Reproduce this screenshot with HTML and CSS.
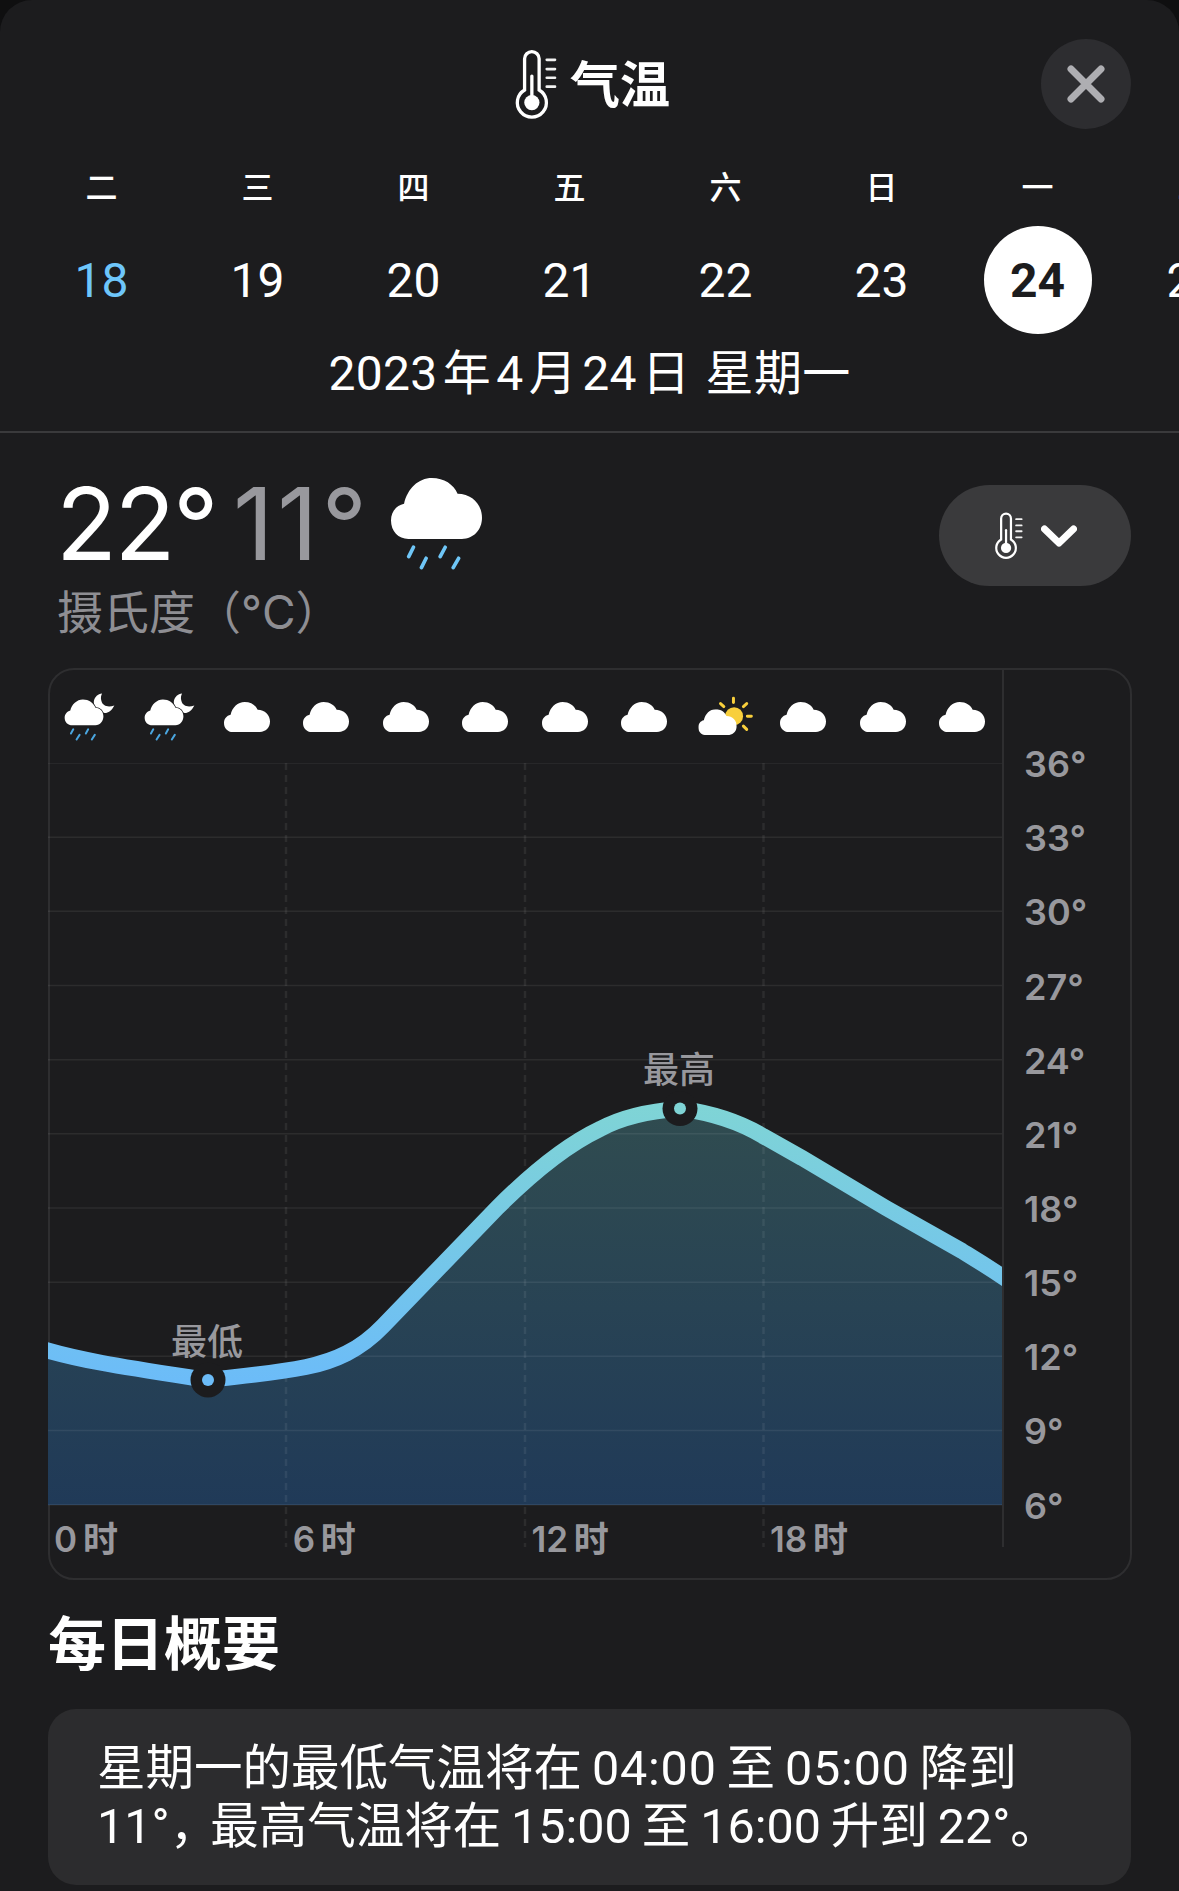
FILE: index.html
```html
<!DOCTYPE html>
<html lang="zh-CN">
<head>
<meta charset="utf-8">
<title>气温</title>
<link rel="stylesheet" href="styles.css">
</head>
<body>
<svg class="defs" width="0" height="0" aria-hidden="true">
  <defs>
    <symbol id="cloud" viewBox="33 53 272 182" preserveAspectRatio="none">
      <path d="M85 235C55 235 33 212 33 180C33 155 48 135 72 130C82 85 115 53 155 53C192 53 220 72 232 100C275 100 305 132 305 172C305 208 280 235 245 235Z" fill="#fff"/>
    </symbol>
    <symbol id="therm" viewBox="100 52 130 216">
      <path d="M132 178V84a22 22 0 0 1 44 0V178a44 44 0 1 1 -44 0Z" fill="none" stroke="#fff" stroke-width="10"/>
      <path d="M154 136V216" stroke="#fff" stroke-width="10" stroke-linecap="round"/>
      <circle cx="154" cy="216" r="23" fill="#fff"/>
      <path d="M199 87H224M199 115H224M199 141H224M199 168H224" stroke="#f2f2f2" stroke-width="8" stroke-linecap="round"/>
    </symbol>
    <symbol id="moonrain" viewBox="40 65 160 150">
      <path d="M158 69C132 72 122 105 150 122C165 132 182 130 195 105C178 112 160 108 156 92C153 82 155 75 158 69Z" fill="#fff"/>
      <path d="M69 165C54 165 45 155 45 142C45 131 52 123 62 120C66 102 82 87 100 87C118 87 132 97 138 112C152 112 162 124 162 138C162 153 152 165 138 165Z" fill="#fff" stroke="#1c1c1e" stroke-width="5" paint-order="stroke"/>
      <path d="M71 177L64 190M116 177L109 190M90 194L81 208M136 194L127 208" stroke="#4aa6e0" stroke-width="6" stroke-linecap="round"/>
    </symbol>
    <symbol id="suncloud" viewBox="50 72 172 125">
      <circle cx="162" cy="135" r="27" fill="#f8cf3c"/>
      <path d="M160 81V94M121 97L131 106M200 97L190 106M202 135H214M190 165L200 175" stroke="#f8cf3c" stroke-width="9" stroke-linecap="round"/>
      <use href="#cloud" x="54" y="114" width="116" height="78"/>
    </symbol>
  </defs>
</svg>

<main class="sheet">
  <header class="header">
    <div class="top-row">
      <span></span>
      <h1 class="title">
        <svg class="title-therm"><use href="#therm"/></svg>
        <span class="title-text">气温</span>
      </h1>
      <button class="close" type="button" aria-label="关闭">
        <svg class="close-x" viewBox="0 0 40 40"><path d="M5 5L35 35M35 5L5 35"/></svg>
      </button>
    </div>
    <div class="week">
      <span>二</span><span>三</span><span>四</span><span>五</span><span>六</span><span>日</span><span>一</span><span>二</span>
    </div>
    <div class="days">
      <span class="day today">18</span>
      <span class="day">19</span>
      <span class="day">20</span>
      <span class="day">21</span>
      <span class="day">22</span>
      <span class="day">23</span>
      <span class="day selected">24</span>
      <span class="day">25</span>
    </div>
    <p class="date">2023&hairsp;年&hairsp;4&hairsp;月&hairsp;24&hairsp;日&thinsp;&hairsp;星期一</p>
  </header>

  <section class="summary-head">
    <div class="temps">
      <div class="temp-line">
        <span class="high">22°</span>
        <span class="low">11°</span>
        <svg class="big-cloud" viewBox="33 53 272 275">
          <path d="M85 235C55 235 33 212 33 180C33 155 48 135 72 130C82 85 115 53 155 53C192 53 220 72 232 100C275 100 305 132 305 172C305 208 280 235 245 235Z" fill="#fff"/>
          <path d="M100 260L86 288M138 293L124 321M195 260L180 288M235 293L219 321" stroke="#6fc6f7" stroke-width="11" stroke-linecap="round"/>
        </svg>
      </div>
      <p class="unit">摄氏度（°C）</p>
    </div>
    <button class="pill" type="button">
      <svg class="pill-therm"><use href="#therm"/></svg>
      <svg class="chevron" viewBox="0 0 36 22"><path d="M3.500 4L18 18L32.500 4"/></svg>
    </button>
  </section>

  <section class="chart-card">
    <div class="plot">
      <div class="icons">
        <svg class="ic-moon"><use href="#moonrain"/></svg>
        <svg class="ic-moon"><use href="#moonrain"/></svg>
        <svg class="ic-cloud"><use href="#cloud"/></svg>
        <svg class="ic-cloud"><use href="#cloud"/></svg>
        <svg class="ic-cloud"><use href="#cloud"/></svg>
        <svg class="ic-cloud"><use href="#cloud"/></svg>
        <svg class="ic-cloud"><use href="#cloud"/></svg>
        <svg class="ic-cloud"><use href="#cloud"/></svg>
        <svg class="ic-sun"><use href="#suncloud"/></svg>
        <svg class="ic-cloud"><use href="#cloud"/></svg>
        <svg class="ic-cloud"><use href="#cloud"/></svg>
        <svg class="ic-cloud"><use href="#cloud"/></svg>
      </div>
      <div class="canvas">
        <svg class="graph" viewBox="48 763 954 784" width="954" height="784">
          <defs>
            <linearGradient id="fillGrad" gradientUnits="userSpaceOnUse" x1="0" y1="1110" x2="0" y2="1505">
              <stop offset="0" stop-color="#304c50"/>
              <stop offset="1" stop-color="#203a58"/>
            </linearGradient>
            <linearGradient id="lineGrad" gradientUnits="userSpaceOnUse" x1="0" y1="1108" x2="0" y2="1380">
              <stop offset="0" stop-color="#7fd4d6"/>
              <stop offset="1" stop-color="#6cbcf8"/>
            </linearGradient>
          </defs>
          <path fill="url(#fillGrad)" d="M48 1351C80 1361 130 1368 208 1380C240 1376 270 1374 306 1367C335 1361 360 1350 383 1326C420 1288 460 1246 497 1208C520 1185 560 1148 600 1129C622 1117 650 1111 680 1108.600C705 1112 735 1119 763 1136L802 1158L886 1208L962 1251C975 1259 990 1268 1002 1276V1505H48Z"/>
          <g class="hgrid">
            <path d="M48 763H1002"/><path d="M48 837.200H1002"/><path d="M48 911.300H1002"/><path d="M48 985.500H1002"/>
            <path d="M48 1059.700H1002"/><path d="M48 1133.800H1002"/><path d="M48 1208H1002"/><path d="M48 1282.200H1002"/>
            <path d="M48 1356.300H1002"/><path d="M48 1430.500H1002"/><path d="M48 1504.700H1002"/>
          </g>
          <g class="vgrid">
            <path d="M286 763V1547"/><path d="M525 763V1547"/><path d="M763.500 763V1547"/>
          </g>
          <path class="curve" d="M36 1347C80 1361 130 1368 208 1380C240 1376 270 1374 306 1367C335 1361 360 1350 383 1326C420 1288 460 1246 497 1208C520 1185 560 1148 600 1129C622 1117 650 1111 680 1108.600C705 1112 735 1119 763 1136L802 1158L886 1208L962 1251C975 1259 990 1268 1012 1283"/>
          <circle cx="208" cy="1380" r="17.500" fill="#1c1c1e"/>
          <circle cx="208" cy="1380" r="6" fill="#6cbcf8"/>
          <circle cx="680" cy="1108.600" r="17.500" fill="#1c1c1e"/>
          <circle cx="680" cy="1108.600" r="6" fill="#7fd4d6"/>
        </svg>
        <span class="extreme ext-low">最低</span>
        <span class="extreme ext-high">最高</span>
        <div class="hours">
          <span>0&thinsp;时</span><span>6&thinsp;时</span><span>12&thinsp;时</span><span>18&thinsp;时</span>
        </div>
      </div>
    </div>
    <div class="axis">
      <span>36°</span><span>33°</span><span>30°</span><span>27°</span><span>24°</span><span>21°</span>
      <span>18°</span><span>15°</span><span>12°</span><span>9°</span><span>6°</span>
    </div>
  </section>

  <h2 class="daily-title">每日概要</h2>
  <section class="daily-card">
    <p>星期一的最低气温将在&thinsp;<span class="num">04:00</span>&thinsp;至&thinsp;<span class="num">05:00</span>&thinsp;降到<br>11°<span class="comma">，</span>最高气温将在&thinsp;15:00&thinsp;至&thinsp;16:00&thinsp;升到&thinsp;22°。</p>
  </section>
</main>
</body>
</html>
```

FILE: styles.css
```css
* { box-sizing: border-box; }

html, body {
  margin: 0;
  padding: 0;
  background: #0f0f10;
}

body {
  font-family: Roboto, "Noto Sans CJK SC", sans-serif;
  color: #fff;
}

.defs { position: absolute; }

.sheet {
  width: 1179px;
  height: 1891px;
  overflow: hidden;
  background: #1c1c1e;
  border-radius: 32px 32px 0 0;
}

.header {
  padding-top: 39px;
  padding-bottom: 29px;
  border-bottom: 2px solid #3a3a3c;
}

.top-row {
  display: grid;
  grid-template-columns: 1fr auto 1fr;
  align-items: center;
  height: 90px;
  padding: 0 48px;
}

.title {
  display: flex;
  align-items: center;
  gap: 13px;
  margin: 0;
  padding-left: 5px;
  font-size: 50px;
  line-height: 72px;
  font-weight: 700;
}

.title-text { padding-top: 3px; }

.title-therm { width: 43px; height: 72px; }

.close {
  justify-self: end;
  display: flex;
  align-items: center;
  justify-content: center;
  width: 90px;
  height: 90px;
  padding: 0;
  border: 0;
  border-radius: 50%;
  background: #2d2d30;
}

.close-x { width: 40px; height: 40px; }
.close-x path { fill: none; stroke: #aeaeb2; stroke-width: 7; stroke-linecap: round; }

.week, .days {
  display: grid;
  grid-template-columns: repeat(8, 156px);
  margin-left: 23.500px;
  justify-items: center;
  align-items: center;
}

.week {
  height: 40px;
  margin-top: 39px;
  font-size: 32px;
  line-height: 40px;
  font-weight: 500;
}

.days {
  height: 108px;
  margin-top: 18px;
}

.day {
  display: flex;
  align-items: center;
  justify-content: center;
  width: 108px;
  height: 108px;
  font-size: 48px;
}

.today { color: #6ec6fa; }

.selected {
  border-radius: 50%;
  background: #fff;
  color: #1c1c1e;
  font-weight: 700;
}

.date {
  margin: 12px 0 0;
  font-size: 48px;
  line-height: 56px;
  letter-spacing: 0.300px;
  text-align: center;
}

.summary-head {
  display: flex;
  justify-content: space-between;
  align-items: flex-start;
  height: 235px;
  padding: 43px 48px 0 56px;
}

.temp-line {
  display: flex;
  align-items: center;
  height: 96px;
  font-family: Inter, "Noto Sans CJK SC", sans-serif;
  font-size: 100px;
  line-height: 96px;
  letter-spacing: -2.500px;
}

.low {
  margin-left: 17px;
  letter-spacing: 3.500px;
  color: #98989d;
}

.big-cloud {
  width: 91px;
  height: 92px;
  margin-left: 21px;
  margin-top: -1px;
}

.unit {
  margin: 14px 0 0 1px;
  font-family: Inter, "Noto Sans CJK SC", sans-serif;
  font-size: 46px;
  line-height: 52px;
  color: #8e8e93;
}

.pill {
  display: flex;
  align-items: center;
  justify-content: center;
  gap: 18px;
  width: 192px;
  height: 101px;
  margin-top: 9px;
  padding: 0;
  border: 0;
  border-radius: 51px;
  background: #3a3a3c;
}

.pill-therm { width: 29px; height: 49px; }
.chevron { width: 36px; height: 22px; }
.chevron path { fill: none; stroke: #fff; stroke-width: 7; stroke-linecap: round; stroke-linejoin: round; }

.chart-card {
  display: flex;
  width: 1084px;
  height: 912px;
  margin-left: 48px;
  border: 2px solid #2e2e30;
  border-radius: 26px;
}

.plot {
  width: 952px;
  height: 877px;
}

.icons {
  display: grid;
  grid-template-columns: repeat(12, 79.500px);
  justify-items: center;
  align-items: center;
  width: 954px;
  height: 93px;
  margin-left: -2px;
}

.ic-moon { width: 53px; height: 50px; margin-left: 4px; }
.ic-cloud { width: 46px; height: 30px; margin-top: 1px; }
.ic-sun { width: 57px; height: 42px; margin-top: -2px; margin-left: 4px; }

.canvas {
  position: relative;
  width: 954px;
  height: 784px;
  margin-left: -2px;
}

.graph { display: block; }

.hgrid path { stroke: rgba(255, 255, 255, 0.07); stroke-width: 1.600; fill: none; }
.vgrid path { stroke: rgba(255, 255, 255, 0.07); stroke-width: 2.500; stroke-dasharray: 7 5; fill: none; }
.curve { fill: none; stroke: url(#lineGrad); stroke-width: 16; }

.extreme {
  position: absolute;
  transform: translateX(-50%);
  font-size: 36px;
  line-height: 40px;
  font-weight: 500;
  color: #98989d;
}

.ext-low { left: 159px; top: 560px; }
.ext-high { left: 631px; top: 288px; }

.hours {
  position: absolute;
  left: 0;
  top: 754px;
  display: grid;
  grid-template-columns: repeat(4, 238.700px);
  font-family: Inter, "Noto Sans CJK SC", sans-serif;
  font-size: 35px;
  line-height: 44px;
  font-weight: 600;
  color: #98989d;
}

.hours span { padding-left: 6px; }

.axis {
  display: flex;
  flex-direction: column;
  height: 877px;
  padding: 57px 0 0 20px;
  border-left: 2px solid #2e2e30;
  font-family: Inter, sans-serif;
  font-size: 36px;
  font-weight: 600;
  color: #98989d;
}

.axis span {
  display: flex;
  align-items: center;
  height: 74.170px;
  flex: none;
}

.daily-title {
  margin: 30px 0 0 48px;
  font-size: 58px;
  line-height: 70px;
  font-weight: 700;
}

.daily-card {
  width: 1083px;
  height: 176px;
  margin: 29px 0 0 48px;
  padding: 31px 0 0 49px;
  border-radius: 28px;
  background: #2c2c2e;
}

.daily-card p {
  margin: 0;
  font-size: 48.500px;
  line-height: 58px;
}

.num { letter-spacing: 0.800px; }
.comma { letter-spacing: -8px; }
```
